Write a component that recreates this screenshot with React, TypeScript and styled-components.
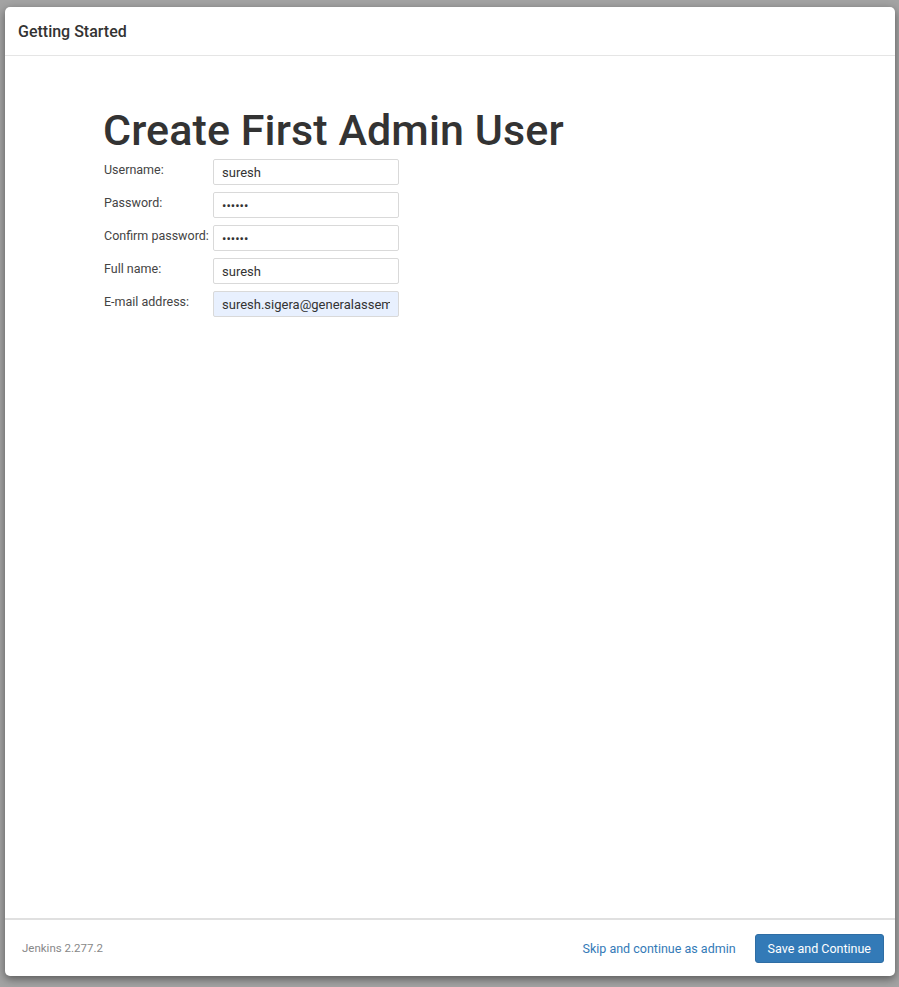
import React from 'react';
import styled, { createGlobalStyle } from 'styled-components';

const GlobalStyle = createGlobalStyle`
  html, body {
    margin: 0;
    padding: 0;
    background: #a3a3a3;
    font-family: Roboto, "Liberation Sans", Arial, sans-serif;
    color: #333;
  }
`;

const Backdrop = styled.div`
  width: 899px;
  height: 987px;
  padding: 7px 4px 11px 5px;
  box-sizing: border-box;
`;

const Dialog = styled.div`
  display: flex;
  flex-direction: column;
  height: 100%;
  background: #fff;
  border-radius: 5px;
  box-shadow: 0 3px 8px rgba(0, 0, 0, 0.45);
  overflow: hidden;
`;

const Header = styled.div`
  height: 48px;
  display: flex;
  align-items: center;
  padding: 0 13px;
  border-bottom: 1px solid #e5e5e5;
`;

const HeaderTitle = styled.h4`
  margin: 0;
  font-size: 16px;
  font-weight: 500;
  color: #333;
`;

const Body = styled.div`
  flex: 1;
  padding: 48px 98px 0 99px;
`;

const Title = styled.h1`
  margin: 0 0 3px -1px;
  font-size: 43px;
  font-weight: 500;
  line-height: 52px;
  color: #333;
  letter-spacing: 0.1px;
`;

const Form = styled.div`
  display: grid;
  grid-template-columns: 109px 186px;
  row-gap: 7px;
`;

const Label = styled.label`
  font-size: 12.5px;
  color: #444;
  padding-top: 3px;
  white-space: nowrap;
`;

const Input = styled.input<{ $filled?: boolean }>`
  width: 186px;
  height: 26px;
  box-sizing: border-box;
  border: 1px solid #d9d9d9;
  border-radius: 2px;
  padding: 0 8px;
  font-family: Roboto, "Liberation Sans", Arial, sans-serif;
  font-size: 13px;
  color: #333;
  background: ${(p) => (p.$filled ? '#e8f0fe' : '#fff')};
  outline: none;
`;

const Footer = styled.div`
  height: 56px;
  display: flex;
  align-items: center;
  padding: 0 11px 0 17px;
  border-top: 2px solid #e0e0e0;
`;

const Version = styled.span`
  font-size: 11.5px;
  color: #888;
  flex: 1;
`;

const SkipLink = styled.a`
  font-size: 12.5px;
  color: #337ab7;
  text-decoration: none;
  margin-right: 19px;
  cursor: pointer;
`;

const SaveButton = styled.button`
  height: 29px;
  padding: 0 12px;
  background: #337ab7;
  color: #fff;
  border: 1px solid #2e6da4;
  border-radius: 3px;
  font-family: Roboto, "Liberation Sans", Arial, sans-serif;
  font-size: 12.5px;
  cursor: pointer;
`;

const fields = [
  { label: 'Username:', value: 'suresh', type: 'text' },
  { label: 'Password:', value: 'secret', type: 'password' },
  { label: 'Confirm password:', value: 'secret', type: 'password' },
  { label: 'Full name:', value: 'suresh', type: 'text' },
  { label: 'E-mail address:', value: 'suresh.sigera@generalassembly.ly', type: 'text', filled: true },
];

const App: React.FC = () => {
  return (
    <>
      <GlobalStyle />
      <Backdrop>
        <Dialog>
          <Header>
            <HeaderTitle>Getting Started</HeaderTitle>
          </Header>
          <Body>
            <Title>Create First Admin User</Title>
            <Form>
              {fields.map((f) => (
                <React.Fragment key={f.label}>
                  <Label>{f.label}</Label>
                  <Input type={f.type} defaultValue={f.value} $filled={f.filled} readOnly />
                </React.Fragment>
              ))}
            </Form>
          </Body>
          <Footer>
            <Version>Jenkins 2.277.2</Version>
            <SkipLink>Skip and continue as admin</SkipLink>
            <SaveButton>Save and Continue</SaveButton>
          </Footer>
        </Dialog>
      </Backdrop>
    </>
  );
};

export default App;
